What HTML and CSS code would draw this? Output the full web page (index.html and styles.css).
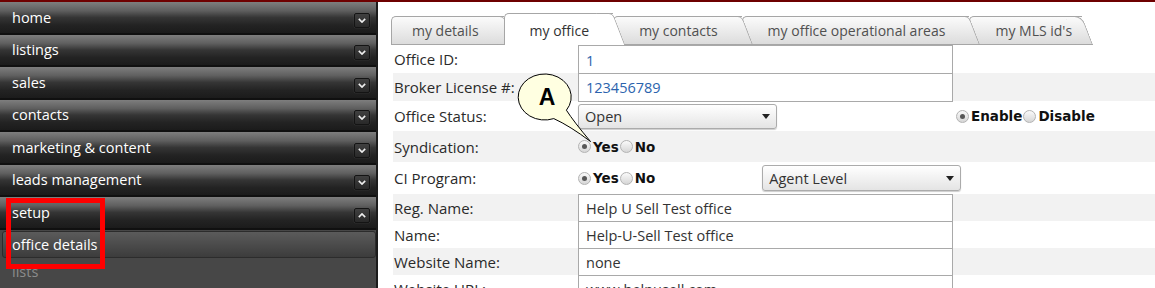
FILE: index.html
```html
<!DOCTYPE html>
<html lang="en">
<head>
    <meta charset="UTF-8">
    <title>Office Details</title>
    <link rel="stylesheet" href="styles.css">
</head>
<body>
    <div class="topline"></div>
    <div class="page">
        <nav class="sidebar">
            <div class="menu-item"><span>home</span><span class="toggle"><svg width="8" height="5" viewBox="0 0 10 6"><polyline points="1,1 5,5 9,1"/></svg></span></div>
            <div class="menu-item"><span>listings</span><span class="toggle"><svg width="8" height="5" viewBox="0 0 10 6"><polyline points="1,1 5,5 9,1"/></svg></span></div>
            <div class="menu-item"><span>sales</span><span class="toggle"><svg width="8" height="5" viewBox="0 0 10 6"><polyline points="1,1 5,5 9,1"/></svg></span></div>
            <div class="menu-item"><span>contacts</span><span class="toggle"><svg width="8" height="5" viewBox="0 0 10 6"><polyline points="1,1 5,5 9,1"/></svg></span></div>
            <div class="menu-item"><span>marketing &amp; content</span><span class="toggle"><svg width="8" height="5" viewBox="0 0 10 6"><polyline points="1,1 5,5 9,1"/></svg></span></div>
            <div class="menu-item"><span>leads management</span><span class="toggle"><svg width="8" height="5" viewBox="0 0 10 6"><polyline points="1,1 5,5 9,1"/></svg></span></div>
            <div class="menu-item"><span>setup</span><span class="toggle"><svg width="8" height="5" viewBox="0 0 10 6"><polyline points="1,5 5,1 9,5"/></svg></span></div>
            <div class="sub-item active">office details</div>
            <div class="sub-item">lists</div>
            <div class="highlight"></div>
        </nav>

        <main class="content">
            <div class="tabs">
                <div class="tab">my details</div>
                <div class="tab active">my office</div>
                <div class="tab">my contacts</div>
                <div class="tab">my office operational areas</div>
                <div class="tab">my MLS id's</div>
            </div>

            <div class="form">
                <div class="row h28">
                    <div class="label">Office ID:</div>
                    <div class="text-box readonly">1</div>
                </div>
                <div class="row h28">
                    <div class="label">Broker License #:</div>
                    <div class="text-box readonly closed">123456789</div>
                </div>
                <div class="row h30">
                    <div class="label">Office Status:</div>
                    <div class="field"><div class="select">Open<span class="arrow"></span></div></div>
                    <div class="extra">
                        <span class="radio checked"></span><span class="radio-label">Enable</span>
                        <span class="radio"></span><span class="radio-label">Disable</span>
                    </div>
                </div>
                <div class="row h31">
                    <div class="label">Syndication:</div>
                    <div class="field">
                        <span class="radio checked"></span><span class="radio-label">Yes</span>
                        <span class="radio"></span><span class="radio-label">No</span>
                    </div>
                </div>
                <div class="row h32">
                    <div class="label">CI Program:</div>
                    <div class="field">
                        <span class="radio checked"></span><span class="radio-label">Yes</span>
                        <span class="radio"></span><span class="radio-label">No</span>
                        <div class="select level-select">Agent Level<span class="arrow"></span></div>
                    </div>
                </div>
                <div class="row">
                    <div class="label">Reg. Name:</div>
                    <div class="text-box">Help U Sell Test office</div>
                </div>
                <div class="row">
                    <div class="label">Name:</div>
                    <div class="text-box">Help-U-Sell Test office</div>
                </div>
                <div class="row">
                    <div class="label">Website Name:</div>
                    <div class="text-box">none</div>
                </div>
                <div class="row">
                    <div class="label">Website URL:</div>
                    <div class="text-box">www.helpusell.com</div>
                </div>
            </div>
        </main>

        <!-- annotation callout -->
        <svg class="callout" width="90" height="80" viewBox="0 0 90 80">
            <path d="M58.4 42.2 A26.5 23 0 1 0 45.8 50.6 Q62 58 82.5 73.5 Q66 54 58.4 42.2 Z" fill="#ffffe1" stroke="#000" stroke-width="1"/>
            <text x="39" y="37" text-anchor="middle">A</text>
        </svg>
    </div>
</body>
</html>
```

FILE: styles.css
```css
body, html {
    margin: 0;
    padding: 0;
    font-family: 'Open Sans', sans-serif;
    background: #fff;
    overflow: hidden;
}
.topline {
    height: 2px;
    background: #6e0000;
}
.page {
    display: flex;
    position: relative;
    height: 286px;
    overflow: hidden;
}

/* left menu */
.sidebar {
    width: 376px;
    flex-shrink: 0;
    border-right: 2px solid #1c1c1c;
    background: #474747;
    position: relative;
}
.menu-item {
    height: 30.5px;
    border-bottom: 2px solid #101010;
    background: linear-gradient(#7e7e7e 0%, #5f5f5f 28%, #353535 50%, #232323 75%, #1b1b1b 100%);
    display: flex;
    align-items: center;
    justify-content: space-between;
    padding: 0 6px 0 12px;
    color: #fff;
    font-size: 14.5px;
}
.toggle {
    width: 16px;
    height: 15px;
    box-sizing: border-box;
    margin-top: 6px;
    border: 1px solid #141414;
    border-radius: 2px;
    background: linear-gradient(#404040, #292929);
    box-shadow: 0 0 1px #666;
    display: flex;
    align-items: center;
    justify-content: center;
}
.toggle polyline {
    fill: none;
    stroke: #eee;
    stroke-width: 2;
}
.sub-item {
    height: 28px;
    line-height: 28px;
    padding-left: 12px;
    color: #8c8c8c;
    font-size: 14.5px;
}
.sub-item.active {
    height: 25px;
    line-height: 25px;
    margin: 1.5px 0 0 2px;
    padding-left: 9px;
    border: 1px solid #2c2c2c;
    border-radius: 3px;
    background: linear-gradient(#5b5b5b, #3c3c3c);
    color: #fff;
}
.highlight {
    position: absolute;
    left: 6px;
    top: 195.5px;
    width: 99px;
    height: 71px;
    box-sizing: border-box;
    border: 5px solid #ff0000;
}

/* right side */
.content {
    flex: 1;
    padding-left: 15px;
}
.tabs {
    display: flex;
    align-items: flex-end;
    height: 43px;
    margin-left: -2px;
}
.tab {
    position: relative;
    height: 27px;
    line-height: 27px;
    padding: 0 24px 0 25px;
    border: 1px solid #a6a6a6;
    border-right: none;
    border-top-left-radius: 5px;
    background: linear-gradient(#fbfbfb, #dcdcdc);
    color: #505050;
    font-size: 14px;
    white-space: nowrap;
}
.tab::after {
    content: '';
    position: absolute;
    top: -1px;
    bottom: -1px;
    right: 0;
    width: 16px;
    background: inherit;
    border-top: 1px solid #a6a6a6;
    border-right: 1px solid #a6a6a6;
    border-bottom: 1px solid #a6a6a6;
    border-top-right-radius: 5px;
    transform: skewX(21deg);
    transform-origin: top;
    z-index: -1;
}
.tab:nth-child(1) { z-index: 5; padding: 0 25px 0 20px; }
.tab:nth-child(3) { z-index: 3; }
.tab:nth-child(4) { z-index: 2; }
.tab:nth-child(5) { z-index: 1; padding-right: 10px; }
.tab:nth-child(5)::after { border-top-right-radius: 8px; }
.tab.active {
    z-index: 10;
    height: 28px;
    padding-top: 3px;
    border-bottom: none;
    background: #fff;
    color: #333;
}
.tab.active::after {
    bottom: 0;
    border-bottom: none;
    background: #fff;
}

.row {
    display: grid;
    grid-template-columns: 185px 375px 1fr;
    align-items: center;
    height: 27px;
}
.row:nth-child(even) {
    background: #f2f2f2;
}
.h28 { height: 28px; }
.h30 { height: 30px; }
.h31 { height: 31px; }
.h32 { height: 32px; }
.label {
    padding-left: 1px;
    color: #2a2a2a;
    font-size: 15px;
}
.text-box {
    align-self: stretch;
    margin-bottom: -1px;
    box-sizing: border-box;
    border: 1px solid #a9a9a9;
    border-bottom: none;
    padding: 0 7px;
    display: flex;
    align-items: center;
    background: #fff;
    color: #333;
    font-size: 14.5px;
    position: relative;
}
.text-box.closed {
    border-bottom: 1px solid #a9a9a9;
}
.text-box.readonly {
    color: #2b63ad;
}
.field, .extra {
    display: flex;
    align-items: center;
    white-space: nowrap;
    min-width: 0;
}
.field > *, .extra > * {
    flex-shrink: 0;
}
.extra {
    padding-left: 3px;
}
.select {
    width: 199px;
    height: 25px;
    box-sizing: border-box;
    border: 1px solid #ababab;
    border-radius: 3px;
    background: linear-gradient(#fff, #e4e4e4);
    box-shadow: 0 1px 1px rgba(0,0,0,0.2);
    display: flex;
    align-items: center;
    justify-content: space-between;
    padding: 0 6px;
    color: #333;
    font-size: 14.5px;
}
.level-select {
    height: 26px;
    margin-left: 106px;
}
.arrow {
    width: 0;
    height: 0;
    border-left: 4px solid transparent;
    border-right: 4px solid transparent;
    border-top: 5px solid #222;
}
.radio {
    display: inline-block;
    width: 13px;
    height: 13px;
    box-sizing: border-box;
    border-radius: 50%;
    border: 1px solid #b3b3b3;
    background: linear-gradient(#fafafa, #d6d6d6);
    position: relative;
}
.radio.checked::after {
    content: '';
    position: absolute;
    inset: 3px;
    border-radius: 50%;
    background: #575757;
}
.radio-label {
    margin: 0 1px 0 2px;
    font-family: 'DejaVu Sans', sans-serif;
    font-weight: bold;
    font-size: 13.5px;
    color: #111;
}

.callout {
    position: absolute;
    left: 508px;
    top: 66px;
}
.callout text {
    font-family: 'Liberation Sans', Arial, sans-serif;
    font-weight: bold;
    font-size: 23px;
    fill: #000;
}
```
